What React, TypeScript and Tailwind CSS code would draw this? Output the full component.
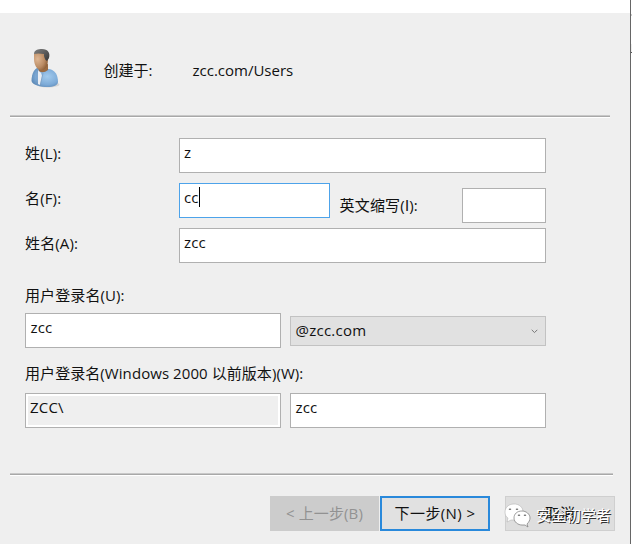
import type { ReactNode } from "react";

function Label({ children, className = "" }: { children: ReactNode; className?: string }) {
  return <span className={`block whitespace-pre leading-[20px] ${className}`}>{children}</span>;
}

function Field({ value = "", className = "", border = "border-[#b0b0b0]", caret = false }: { value?: string; className?: string; border?: string; caret?: boolean }) {
  return (
    <div className={`flex h-[35px] shrink-0 border bg-white pl-[4.5px] pt-[3px] ${border} ${className}`}>
      <Label className="tracking-[0.1px]">{value}</Label>
      {caret && <span className="h-[20px] w-px bg-black" />}
    </div>
  );
}

function Divider({ className = "" }: { className?: string }) {
  return <div className={`h-[3px] shrink-0 border-b border-t border-b-white border-t-[#c8c8c8] bg-[#a8a8a8] ${className}`} />;
}

function UserIcon() {
  return (
    <svg width="32" height="42" viewBox="0 0 32 42" className="shrink-0">
      <defs>
        <radialGradient id="skin" cx=".25" cy=".4" r=".8">
          <stop offset="0" stopColor="#dfb794" />
          <stop offset=".6" stopColor="#b98a62" />
          <stop offset="1" stopColor="#80532c" />
        </radialGradient>
        <radialGradient id="coat" cx=".6" cy=".45" r=".65">
          <stop offset="0" stopColor="#a3cbed" />
          <stop offset=".65" stopColor="#7dabd8" />
          <stop offset="1" stopColor="#5c88b5" />
        </radialGradient>
        <linearGradient id="hair" x1="0" y1="0" x2="1" y2="1">
          <stop offset="0" stopColor="#808080" />
          <stop offset="1" stopColor="#363636" />
        </linearGradient>
      </defs>
      <ellipse cx="18" cy="36.5" rx="11.5" ry="3" fill="#bbb" opacity=".5" />
      <path d="M7 20C3 22 1.5 28 1.5 33c1 4 9 6 16 6 6 0 10.500-2 10.500-5 0-7-3-12-9-13Z" fill="url(#coat)" />
      <path d="m8 22 3 3 1 3-2 9-2-1Z" fill="#e9edf3" />
      <path d="m8 22-1 4 0 10M13 25l-3 13" stroke="#7396b8" strokeWidth=".6" fill="none" />
      <path d="M8 18l1 5q4 3 9-1l0-6Z" fill="#9a6b42" />
      <path d="M4 6q4-3 10-2l4.500 3-1 9q-2 6-6.500 6c-4 0-7-5-7-11Z" fill="url(#skin)" />
      <path d="M4 6C4 2 8 1 12 1c6 0 8.500 4 7 9l-2 3c-2-1-2-2-3-5L14 6Q8 5 4 6Z" fill="url(#hair)" />
    </svg>
  );
}

function WeChatIcon() {
  return (
    <svg width="27" height="25" viewBox="0 0 27 25" className="shrink-0">
      <path d="M10 1C4 1 1 5 1 9c0 3 1 5 3 6l-1 4 4-2 5 0c5-1 7-5 7-8 0-5-4-8-9-8Z" fill="#fff" stroke="#aaa" strokeWidth=".5" />
      <path d="M18 8c-5 0-8 3-8 7s4 7 8 7l3 0 3 2-1-3c2-2 3-4 3-6 0-4-4-7-8-7Z" fill="#fff" stroke="#777" strokeWidth=".7" />
      <path d="M5 6.5q1-1 2 0M12 6.5q1-1 2 0M14 12.5q1-1 2 0M20 12.5q1-1 2 0" stroke="#555" strokeWidth="1.1" fill="none" />
    </svg>
  );
}

export default function App() {
  return (
    <div className="flex h-[544px] w-[632px] overflow-hidden bg-white font-['Open_Sans','Noto_Sans_CJK_SC',sans-serif] text-[15px] text-[#111]">
      <main className="flex w-[630px] shrink-0 flex-col border-t-[13px] border-white bg-[#efefef]">
        <header className="flex h-[102px] shrink-0 items-start pl-[30px] pt-[35px]">
          <UserIcon />
          <Label className="ml-[41.5px] mt-[12px] w-[89px]">创建于:</Label>
          <Label className="mt-[12px]">zcc.com/Users</Label>
        </header>
        <Divider className="ml-[10px] w-[600px]" />

        <section className="flex flex-col gap-[10px] pl-[25px] pt-[20px]">
          <div className="flex h-[35px]">
            <Label className="w-[153.5px] pt-[5px] tracking-[0.15px]">姓(L):</Label>
            <Field value="z" className="w-[367.5px]" />
          </div>
          <div className="flex h-[35px]">
            <Label className="w-[153.5px] pt-[5px] tracking-[0.15px]">名(F):</Label>
            <Field value="cc" caret border="border-[rgb(77,163,234)]" className="w-[151.5px]" />
            <Label className="ml-[9.5px] w-[122.5px] pt-[12px] tracking-[0.2px]">英文缩写(<span className="font-['Roboto']">I</span>):</Label>
            <Field className="mt-[5px] w-[84px]" />
          </div>
          <div className="flex h-[35px]">
            <Label className="w-[153.5px] pt-[5px] tracking-[0.15px]">姓名(A):</Label>
            <Field value="zcc" className="w-[367.5px]" />
          </div>
        </section>

        <section className="flex flex-col pl-[25px] pt-[22px]">
          <Label className="tracking-[0.1px]">用户登录名(U):</Label>
          <div className="mt-[8px] flex h-[35px] items-start gap-[9px]">
            <Field value="zcc" className="w-[256px]" />
            <div className="mt-[3px] flex h-[30px] w-[256px] items-center justify-between border border-[#c2c2c2] bg-[#e1e1e1] pl-[4.5px] pr-[7px]">
              <Label className="-mt-[2px] tracking-[0.25px]">@zcc.com</Label>
              <svg width="7" height="5" viewBox="0 0 7 5"><path d="m.7.8 2.8 2.8L6.3.8" fill="none" stroke="#777" /></svg>
            </div>
          </div>
          <Label className="mt-[15px] tracking-[0.07px]">用户登录名(Windows 2000 以前版本)(W):</Label>
          <div className="mt-[10px] flex gap-[9px]">
            <div className="h-[35px] w-[256px] border border-[#b0b0b0] bg-[#efefef] pl-[2.5px] pt-[3px] ring-2 ring-inset ring-white">
              <Label className="pl-[1.5px] tracking-[0.2px]">ZCC\</Label>
            </div>
            <Field value="zcc" className="w-[256px]" />
          </div>
        </section>

        <Divider className="ml-[10px] mt-[45px] w-[603px]" />
        <footer className="flex pl-[270px] pt-[20px]">
          <div className="flex h-[35px] w-[109px] items-center justify-center bg-[#cccccc] text-[#929292]"><Label className="-mt-[2px] tracking-[0.1px]">{"< 上一步(B)"}</Label></div>
          <div className="ml-[1px] flex h-[35px] w-[110px] items-center justify-center border-2 border-[#2989db] bg-[#e1e1e1]"><Label className="-mt-[2px] tracking-[0.4px]">{"下一步(N) >"}</Label></div>
          <div className="relative ml-[15px] flex h-[35px] w-[110px] items-center justify-center border border-[#cfcfcf] bg-[#dedede]">
            <Label className="-mt-[2px]">取消</Label>
            <div className="absolute left-[-2px] top-[6px] flex items-center gap-[5px] whitespace-nowrap text-white">
              <WeChatIcon />
              <Label className="-mt-[2px] [text-shadow:1px_1px_0_#333]">安全初学者</Label>
            </div>
          </div>
        </footer>
      </main>
      <div className="w-px bg-[#666]" />
      <div className="flex w-px flex-col bg-white pt-[14px]">
        <span className="h-[2px] bg-[#ccc]" />
        <span className="mt-[28px] h-[8px] bg-[#eee]" />
        <span className="h-px bg-[#555]" />
      </div>
    </div>
  );
}
